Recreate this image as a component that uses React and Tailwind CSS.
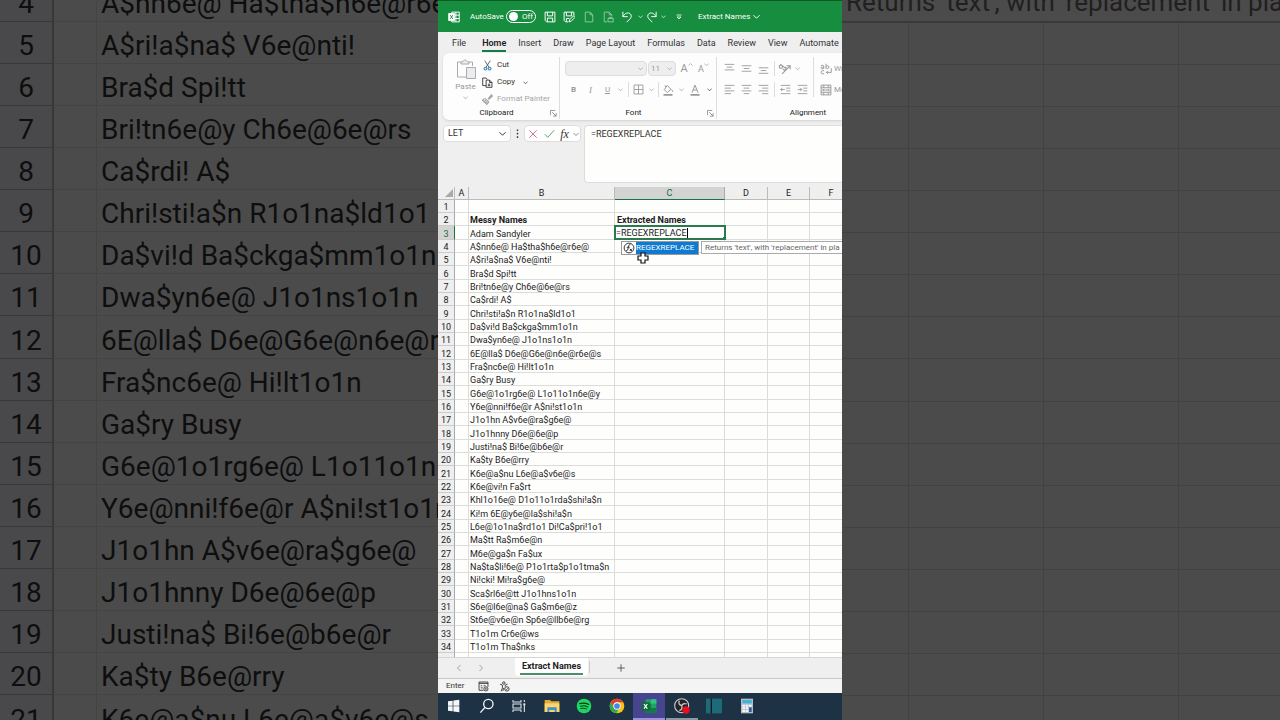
import { useState } from "react";

const names = [
  "Adam Sandyler",
  "A$nn6e@ Ha$tha$h6e@r6e@",
  "A$ri!a$na$ V6e@nti!",
  "Bra$d Spi!tt",
  "Bri!tn6e@y Ch6e@6e@rs",
  "Ca$rdi! A$",
  "Chri!sti!a$n R1o1na$ld1o1",
  "Da$vi!d Ba$ckga$mm1o1n",
  "Dwa$yn6e@ J1o1ns1o1n",
  "6E@lla$ D6e@G6e@n6e@r6e@s",
  "Fra$nc6e@ Hi!lt1o1n",
  "Ga$ry Busy",
  "G6e@1o1rg6e@ L1o11o1n6e@y",
  "Y6e@nni!f6e@r A$ni!st1o1n",
  "J1o1hn A$v6e@ra$g6e@",
  "J1o1hnny D6e@6e@p",
  "Justi!na$ Bi!6e@b6e@r",
  "Ka$ty B6e@rry",
  "K6e@a$nu L6e@a$v6e@s",
  "K6e@vi!n Fa$rt",
  "Khl1o16e@ D1o11o1rda$shi!a$n",
  "Ki!m 6E@y6e@la$shi!a$n",
  "L6e@1o1na$rd1o1 Di!Ca$pri!1o1",
  "Ma$tt Ra$m6e@n",
  "M6e@ga$n Fa$ux",
  "Na$ta$li!6e@ P1o1rta$p1o1tma$n",
  "Ni!cki! Mi!ra$g6e@",
  "Sca$rl6e@tt J1o1hns1o1n",
  "S6e@l6e@na$ Ga$m6e@z",
  "St6e@v6e@n Sp6e@llb6e@rg",
  "T1o1m Cr6e@ws",
  "T1o1m Tha$nks",
];

// row 1 is empty, row 2 holds the headings, names start at row 3
const rows = Array.from({ length: 34 }, (_, i) => ({
  n: i + 1,
  name: i === 1 ? "Messy Names" : names[i - 2] || "",
}));

const tabs = ["File", "Home", "Insert", "Draw", "Page Layout", "Formulas", "Data", "Review", "View", "Automate"];

// --- ICON HELPERS ---
const Icon = ({ className = "size-3", children }) => (
  <svg
    className={`shrink-0 ${className}`}
    viewBox="0 0 16 16"
    fill="none"
    stroke="currentColor"
    strokeWidth="1.3"
    aria-hidden="true"
  >
    {children}
  </svg>
);

const Chevron = ({ className = "size-[7px]" }) => (
  <Icon className={className}>
    <path d="M1 5l7 7 7-7" strokeWidth="2.2" />
  </Icon>
);

const Tool = ({ label, className = "w-[17px]", children }) => (
  <button aria-label={label} className={`flex shrink-0 items-center justify-center ${className}`}>
    {children}
  </button>
);

const Lines = ({ d, className = "size-[11px]" }) => (
  <Icon className={className}>
    <path d={d} />
  </Icon>
);

// --- ENLARGED SHEET BEHIND THE WINDOW ---
const BackdropLeft = () => (
  <div className="min-w-0 overflow-hidden">
    <table className="-mt-5 w-full table-fixed border-separate border-spacing-0 text-[28px] leading-[35px] text-[#0e0e0e]">
      <colgroup>
        <col className="w-[54px]" />
        <col className="w-[43px]" />
        <col />
      </colgroup>
      <tbody>
        {rows.slice(3, 21).map((r) => (
          <tr key={r.n} className="h-[42px] nth-[9n]:h-[43px]">
            <th className="overflow-hidden border-r-2 border-b border-r-[#383838] border-b-[#383838] bg-[#49494b] p-0 pt-[6px] text-center font-normal">
              {r.n}
            </th>
            <td className="border-r border-b border-[#444442] p-0" />
            <td className="overflow-hidden border-b border-[#444442] p-0 pt-[6px] pl-1 whitespace-nowrap">{r.name}</td>
          </tr>
        ))}
      </tbody>
    </table>
  </div>
);

const BackdropRight = () => (
  <div className="min-w-0 overflow-hidden">
    <div className="flex h-[23px] items-end overflow-hidden border-b-2 border-[#3a3a3a] pl-1 text-[26px] leading-[38px] whitespace-nowrap text-[#202020]">
      Returns 'text', with 'replacement' in pla
    </div>
    <table className="w-full table-fixed border-separate border-spacing-0">
      <colgroup>
        <col className="w-[67px]" />
        <col className="w-[135px]" />
        <col className="w-[135px]" />
        <col />
      </colgroup>
      <tbody>
        {rows.slice(4, 21).map((r) => (
          <tr key={r.n} className="h-[42px] nth-[9n]:h-[43px]">
            <td className="border-r border-b border-[#424240]" />
            <td className="border-r border-b border-[#424240]" />
            <td className="border-r border-b border-[#424240]" />
            <td className="border-b border-[#424240]" />
          </tr>
        ))}
      </tbody>
    </table>
  </div>
);

// --- TITLE BAR ---
const TitleBar = () => {
  const [autoSave, setAutoSave] = useState(false);
  return (
    <header className="flex h-8 shrink-0 items-center border-t border-[#0b5a27] bg-[#178d40] pl-[10px] text-[8px] text-white">
      <Icon className="mr-[10px] size-3">
        <path d="M5 3V1.500h10v13H5V13M9 5.500h6M9 10h6M10.500 1.500v13" />
        <rect x="1" y="3.500" width="7.500" height="9" fill="#fff" />
        <path d="M3 5.500l3.500 5M6.500 5.500l-3.500 5" stroke="#178d40" />
      </Icon>
      <label className="flex items-center">
        <span className="w-[36px]">AutoSave</span>
        <input
          type="checkbox"
          role="switch"
          className="sr-only"
          checked={autoSave}
          onChange={(e) => setAutoSave(e.target.checked)}
        />
        <span className="flex h-[13px] w-[30px] items-center gap-1 rounded-full border border-white pl-[2px]">
          <span className="size-[9px] rounded-full bg-white" />
          <span>{autoSave ? "On" : "Off"}</span>
        </span>
      </label>
      <div className="ml-1 flex items-center">
        <Tool label="Save" className="w-[19px]">
          <Icon>
            <path d="M1.500 1.500h13v13h-11l-2-2zM4.500 1.500v5h7v-5M4.500 14.500v-5h7v5" />
          </Icon>
        </Tool>
        <Tool label="Save as" className="w-[20px]">
          <Icon>
            <path d="M7 14.500H3.500l-2-2v-11h13v5M4.500 1.500v5h7v-5M4.500 14v-4h4M8 14.500l1-3 5-5 2 2-5 5z" />
          </Icon>
        </Tool>
        <Tool label="New" className="w-[19px] opacity-50">
          <Icon>
            <path d="M3 1.500h6.500L13 5v9.500H3zM9.500 1.500V5H13" />
          </Icon>
        </Tool>
        <Tool label="Protect" className="w-[20px] opacity-50">
          <Icon>
            <path d="M7 14.500H3v-13h6.500L13 5v2M9.500 1.500V5H13M8 10h7v4.500H8zM9.500 10V8.500h4V10" />
          </Icon>
        </Tool>
        <Tool label="Undo" className="w-[18px]">
          <Icon>
            <path d="M2.500 1v6.500H9M2.500 7.500C5 3 9 1.500 12 3.500c2.500 2 2 5 0 7L7.500 15" />
          </Icon>
        </Tool>
        <Chevron className="ml-[2px] size-[5px]" />
        <Tool label="Redo" className="w-[18px]">
          <Icon>
            <path d="M13.500 1v6.500H7M13.500 7.500C11 3 7 1.500 4 3.500c-2.500 2-2 5 0 7L8.500 15" />
          </Icon>
        </Tool>
        <Chevron className="size-[5px]" />
        <Tool label="Customize" className="ml-[6px] w-[14px]">
          <Icon className="size-2">
            <path d="M3 4h10M4 8l4 4 4-4z" strokeWidth="1.600" />
          </Icon>
        </Tool>
      </div>
      <button className="ml-3 flex items-center gap-[3px] whitespace-nowrap">
        Extract Names <Chevron />
      </button>
    </header>
  );
};

const RibbonTabs = () => (
  <nav className="flex h-[21px] shrink-0 items-center gap-3 pt-[2px] pl-[14px] text-[9px] leading-[14px] whitespace-nowrap text-[#333]">
    {tabs.map((tab) => (
      <a
        key={tab}
        href="#"
        className={
          tab === "Home"
            ? "ml-1 border-b-2 border-[#187a45] font-semibold text-[#222]"
            : "border-b-2 border-transparent"
        }
      >
        {tab}
      </a>
    ))}
  </nav>
);

// --- RIBBON ---
const Launcher = () => (
  <Icon className="size-[7px]">
    <path d="M1 12V1h11M5 5l9 9M14 7v7H7" strokeWidth="1.700" />
  </Icon>
);

const Group = ({ title, className, children }) => (
  <section className={`flex shrink-0 flex-col justify-between ${className}`}>
    {children}
    <div className="flex h-3 items-center pr-[2px]">
      <h2 className="flex-1 text-center text-[#222]">{title}</h2>
      {title !== "Alignment" && (
        <button aria-label={`${title} settings`} className="text-[#777]">
          <Launcher />
        </button>
      )}
    </div>
  </section>
);

const Ribbon = () => (
  <div className="ml-[5px] flex h-[67px] shrink-0 overflow-hidden rounded-l-md bg-[#fdfdfd] pt-1 pb-px text-[8px] leading-[12px] whitespace-nowrap text-[#999] shadow-sm">
    <Group title="Clipboard" className="w-[117px] border-r border-[#ddd]">
      <div className="flex pl-[10px]">
        <button className="flex w-[25px] flex-col items-center pt-[2px]">
          <svg className="h-[21px] w-5" viewBox="0 0 20 21" fill="none" stroke="#aaa" aria-hidden="true">
            <path d="M5 3H1.500v15H10M13 3h3.500v4" />
            <path d="M5 5V3l2-.5C7.500.5 10.500.5 11 2.500l2 .5v2z" fill="#eee" />
            <path d="M10.500 8.500h9v11h-9z" fill="#ececf0" />
          </svg>
          <span className="mt-px">Paste</span>
          <Chevron className="mt-[2px] size-[5px]" />
        </button>
        <div className="ml-1 flex flex-col gap-[5px] pt-[2px] text-[#333]">
          <button className="flex items-center gap-1">
            <Icon className="size-[11px]">
              <path d="M4 1l6.500 10M12 1L5.500 11" stroke="#555" />
              <path d="M5 10.500a2 2 0 1 0 .1 0M11 10.500a2 2 0 1 0 .1 0" stroke="#3b86bd" strokeWidth="1.600" />
            </Icon>
            Cut
          </button>
          <button className="flex items-center gap-1">
            <Icon className="size-[11px]">
              <path d="M6 12.500H1v-11h5l2 2M6 4.500h5l3.500 3.500v7H6zM11 4.500V8h3.500M8.500 10.500H12M8.500 12.500H12" />
            </Icon>
            Copy
            <Chevron className="ml-1 size-[5px]" />
          </button>
          <button className="flex items-center gap-1 text-[#a5a5a5]">
            <Icon className="size-[11px]">
              <path d="M9 7l4.500-5.500 1.500 1.500-5.500 5M4 6l6 5.500M3 7L1 9l6 6 3-3.500M3.500 11l2-2M5.500 13l2-2" strokeWidth="1.800" />
            </Icon>
            Format Painter
          </button>
        </div>
      </div>
    </Group>

    <Group title="Font" className="w-[157px] border-r border-[#ddd]">
      <div className="flex flex-col gap-[6px] pt-1 pl-[5px]">
        <div className="flex items-center">
          <span className="relative flex items-center">
            <select aria-label="Font" className="h-[15px] w-[82px] appearance-none rounded-sm border border-[#ddd] bg-[#eeeeef]">
              <option />
            </select>
            <Chevron className="pointer-events-none absolute right-1 size-[5px]" />
          </span>
          <span className="relative ml-px flex items-center">
            <select
              aria-label="Font size"
              className="h-[15px] w-7 appearance-none rounded-sm border border-[#ddd] bg-[#eeeeef] pl-[2px]"
            >
              <option>11</option>
            </select>
            <Chevron className="pointer-events-none absolute right-1 size-[5px]" />
          </span>
          <Tool label="Increase font size" className="ml-[2px] w-[17px]">
            <span className="text-[11px]">A</span>
            <Icon className="mb-2 size-[5px]">
              <path d="M2 11l6-6 6 6" strokeWidth="2.200" />
            </Icon>
          </Tool>
          <Tool label="Decrease font size">
            <span className="text-[9px]">A</span>
            <Chevron className="mb-2 size-[5px]" />
          </Tool>
        </div>
        <div className="flex h-[15px] items-center">
          <Tool label="Bold">
            <b>B</b>
          </Tool>
          <Tool label="Italic">
            <i className="font-['Liberation_Serif',serif] text-[9px]">I</i>
          </Tool>
          <Tool label="Underline">
            <u>U</u>
          </Tool>
          <Tool label="Underline style" className="w-2">
            <Chevron className="size-[5px]" />
          </Tool>
          <span className="ml-1 h-[15px] w-px bg-[#ddd]" />
          <Tool label="Borders" className="w-[18px]">
            <Icon className="size-[11px]">
              <path d="M1.500 1.500h13v13h-13zM8 1.500v13M1.500 8h13" />
            </Icon>
          </Tool>
          <Tool label="Border style" className="w-2">
            <Chevron className="size-[5px]" />
          </Tool>
          <span className="ml-[3px] h-[15px] w-px bg-[#ddd]" />
          <Tool label="Fill color" className="w-[18px]">
            <Icon className="size-[12px]">
              <path d="M7 2l5 5-5 4.500L3 7.500zM5 4L4 2M13 7.500l1.500 3" />
              <path d="M2 14.500h12" strokeWidth="2.600" />
            </Icon>
          </Tool>
          <Tool label="Fill options" className="w-2">
            <Chevron className="size-[5px]" />
          </Tool>
          <Tool label="Font color" className="w-[20px]">
            <Icon className="size-[12px]">
              <path d="M4 11.500L8 1.500l4 10M5.500 8h5" />
              <path d="M2 14.500h12" strokeWidth="2.600" />
            </Icon>
          </Tool>
          <Tool label="Font color options" className="w-2 text-[#333]">
            <Chevron className="size-[5px]" />
          </Tool>
        </div>
      </div>
    </Group>

    <Group title="Alignment" className="w-[184px]">
      <div className="flex pl-1">
        <div className="flex flex-col gap-[6px] pt-1">
          <div className="flex h-[15px] items-center">
            <Tool label="Top align">
              <Lines d="M1 2h14M4 6h8M1 10h14" />
            </Tool>
            <Tool label="Middle align">
              <Lines d="M1 4h14M4 8h8M1 12h14" />
            </Tool>
            <Tool label="Bottom align">
              <Lines d="M1 7h14M4 11h8M1 15h14" />
            </Tool>
            <span className="mx-[2px] h-[15px] w-px bg-[#ddd]" />
            <Tool label="Orientation" className="w-[14px]">
              <Icon className="size-[13px]">
                <path d="M1.500 6a2 2 0 1 1 3 1.500 2 2 0 0 1-3-1.500M3 2.500l6 5M6 8a2 2 0 1 0 3-2M5 14.500L14.500 5M10.500 4.500h4.500V9" />
              </Icon>
            </Tool>
            <Chevron className="ml-1 size-[5px]" />
          </div>
          <div className="flex h-[15px] items-center">
            <Tool label="Align left">
              <Lines d="M1 2h14M1 6h9M1 10h14M1 14h9" />
            </Tool>
            <Tool label="Center">
              <Lines d="M1 2h14M4 6h8M1 10h14M4 14h8" />
            </Tool>
            <Tool label="Align right">
              <Lines d="M1 2h14M6 6h9M1 10h14M6 14h9" />
            </Tool>
            <span className="mx-[2px] h-[15px] w-px bg-[#ddd]" />
            <Tool label="Decrease indent">
              <Lines d="M1 2h14M9 6h6M9 10h6M1 14h14M7 8H1M3.500 5.500L1 8l2.500 2.500" />
            </Tool>
            <Tool label="Increase indent">
              <Lines d="M1 2h14M9 6h6M9 10h6M1 14h14M1 8h6M4.500 5.500L7 8l-2.500 2.500" />
            </Tool>
          </div>
        </div>
        <div className="ml-[2px] flex flex-col gap-[6px] border-l border-[#ddd] pt-1 pl-[6px]">
          <button className="flex h-[15px] items-center gap-[2px]">
            <Icon>
              <path d="M1.500 3.500c2-1 3.500-.5 3.500 1v3M5 5.500c-2 0-4 0-3.800 1.500.3 1 2.800 1 3.800-.5M8 1v6.500M8 4.500c1-1.500 4-1 4 1s-3 2.500-4 1M5.500 10.500c-2-1-4 0-4 2s2 2.500 4 1.500M15 7v5.500H8.500M10.500 10.500l-2 2 2 2" />
            </Icon>
            Wrap
          </button>
          <button className="flex h-[15px] items-center gap-[2px]">
            <Icon>
              <path d="M1.500 1.500h13v13h-13zM1.500 5h13M1.500 11h13M5 1.500V5M11 1.500V5M5 11v3.500M11 11v3.500M3.500 8h9M5 6.500L3.500 8 5 9.500M11 6.500L12.500 8 11 9.500" />
            </Icon>
            Merge
          </button>
        </div>
      </div>
    </Group>
  </div>
);

// --- FORMULA BAR ---
const FormulaBar = ({ formula, setFormula }) => (
  <div className="flex h-[67px] shrink-0 items-start pt-[5px] pl-[5px] text-[9px] text-[#333]">
    <label className="flex h-[17px] w-[68px] items-center rounded-sm border border-[#ddd] bg-white px-1">
      <input aria-label="Name box" defaultValue="LET" className="w-0 flex-1 outline-none" />
      <Chevron />
    </label>
    <span className="flex h-[17px] w-[13px] items-center justify-center">
      <Icon className="size-[11px]">
        <path d="M8 2v2.500M8 7v2.500M8 12v2.500" strokeWidth="2" />
      </Icon>
    </span>
    <div className="flex h-[17px] w-[57px] items-center rounded-sm border border-[#ddd] bg-white">
      <Tool label="Cancel" className="w-4 text-[#c4576f]">
        <Lines d="M2 2l12 12M14 2L2 14" className="size-[10px]" />
      </Tool>
      <Tool label="Enter" className="w-4 text-[#4a9c62]">
        <Lines d="M1 9l4.500 4.500L15 3" />
      </Tool>
      <Tool label="Insert function" className="w-[15px]">
        <i className="font-['Liberation_Serif',serif] text-[12px] leading-none">fx</i>
      </Tool>
      <Chevron className="ml-px size-[6px] text-[#777]" />
    </div>
    <textarea
      aria-label="Formula"
      value={formula}
      onChange={(e) => setFormula(e.target.value)}
      className="ml-[3px] h-[58px] w-0 flex-1 resize-none rounded-l-sm border border-r-0 border-[#ddd] bg-[#fefefc] px-[6px] py-[2px] leading-[12px] outline-none"
    />
  </div>
);

// --- SHEET ---
const Suggestion = () => (
  <div className="absolute top-[15px] left-[6px] z-10 flex items-start gap-[2px] text-[8px]">
    <button className="flex h-[14px] w-[78px] items-center border border-[#999] bg-white text-white">
      <Icon className="mx-px size-3 text-[#333]">
        <circle cx="8" cy="8" r="6.500" />
        <path d="M10 3.500c-2-.5-2.500 1-3 4s-1 4.500-3 4M5 7h4M9 9l3 3M12 9l-3 3" />
      </Icon>
      <span className="h-full flex-1 bg-[#0e7ad1] text-left leading-[12px]">REGEXREPLACE</span>
    </button>
    <div className="h-[13px] w-[160px] border border-[#aaa] bg-white pl-[3px] leading-[11px] whitespace-nowrap text-[#666]">
      Returns 'text', with 'replacement' in pla
    </div>
    <svg className="absolute top-[11px] left-4 size-3" viewBox="0 0 12 12" aria-hidden="true">
      <path d="M4 1h4v3h3v4H8v3H4V8H1V4h3z" fill="#fff" stroke="#111" strokeWidth="1.200" />
    </svg>
  </div>
);

const line = "border-r border-b border-[#dcdcdc] p-0";

const Sheet = ({ formula, setFormula }) => (
  <div className="min-h-0 flex-1 overflow-hidden bg-[#fefefd]">
    <table className="w-[415px] table-fixed border-separate border-spacing-0 text-[9px] leading-[10px] text-[#1c1c1c]">
      <colgroup>
        <col className="w-[17px]" />
        <col className="w-[14px]" />
        <col className="w-[146px]" />
        <col className="w-[110px]" />
        <col className="w-[43px]" />
        <col className="w-[42px]" />
        <col className="w-[43px]" />
      </colgroup>
      <thead>
        <tr className="h-[13px] bg-[#efefef]">
          <th className="border-r border-b border-[#bbb] p-0">
            <svg className="ml-[7px] size-2" viewBox="0 0 8 8" aria-hidden="true">
              <path d="M8 0v8H0z" fill="#aaa" />
            </svg>
          </th>
          {["A", "B", "C", "D", "E", "F"].map((c) => (
            <th
              key={c}
              className={
                c === "C"
                  ? "border-r border-b border-r-[#aaa] border-b-[#1b7245] bg-[#d2d3d2] p-0 font-normal text-[#1b6b41]"
                  : "border-r border-b border-[#bbb] p-0 font-normal"
              }
            >
              {c}
            </th>
          ))}
        </tr>
      </thead>
      <tbody>
        {rows.map((r) => (
          <tr key={r.n} className="h-[13px] nth-[3n]:h-[14px]">
            <th
              className={
                r.n === 3
                  ? "border-r border-b border-r-[#1b7245] border-b-[#ccc] bg-[#d2d3d2] p-0 pt-[2px] font-normal text-[#1b6b41]"
                  : "border-r border-b border-r-[#aaa] border-b-[#ccc] bg-[#efefef] p-0 pt-[2px] font-normal"
              }
            >
              {r.n}
            </th>
            <td className={line} />
            <td className={`${line} pt-[2px] pl-px whitespace-nowrap ${r.n === 2 ? "font-bold" : ""}`}>{r.name}</td>
            {r.n === 3 ? (
              <td className="relative p-0">
                <div className="absolute -inset-x-px -top-px bottom-0 flex items-center border-2 border-[#2b7a4d] bg-white">
                  <input
                    aria-label="Cell C3"
                    value={formula}
                    onChange={(e) => setFormula(e.target.value)}
                    className="field-sizing-content h-[11px] outline-none"
                  />
                  <span className="h-[10px] w-px bg-black" />
                  <span className="absolute -right-[2px] -bottom-[2px] size-[3px] bg-[#2b7a4d]" />
                </div>
                <Suggestion />
              </td>
            ) : (
              <td className={`${line} pt-[2px] pl-[2px] font-bold`}>{r.n === 2 ? "Extracted Names" : ""}</td>
            )}
            <td className={line} />
            <td className={line} />
            <td className={line} />
          </tr>
        ))}
        {/* top of the next row, cut by the sheet tabs */}
        <tr className="h-1">
          <th className="border-r border-[#aaa] bg-[#efefef] p-0" />
          <td className="border-r border-[#dcdcdc] p-0" />
          <td className="border-r border-[#dcdcdc] p-0" />
          <td className="border-r border-[#dcdcdc] p-0" />
          <td className="border-r border-[#dcdcdc] p-0" />
          <td className="border-r border-[#dcdcdc] p-0" />
          <td className="p-0" />
        </tr>
      </tbody>
    </table>
  </div>
);

const SheetTabs = () => (
  <div className="flex h-[21px] shrink-0 items-start border-t border-[#d5d5d5] bg-[#efefef] pl-[15px] text-[9px] text-[#777]">
    <Tool label="Previous sheet" className="h-[19px] w-3">
      <Lines d="M11 2L5 8l6 6" className="size-2" />
    </Tool>
    <Tool label="Next sheet" className="ml-[10px] h-[19px] w-3">
      <Lines d="M5 2l6 6-6 6" className="size-2" />
    </Tool>
    <button className="ml-[28px] h-[18px] w-[73px] rounded-b bg-white px-[5px] font-bold whitespace-nowrap text-[#222]">
      <span className="block border-b-2 border-[#4d8f6b] leading-[13px]">Extract Names</span>
    </button>
    <span className="mt-[3px] ml-px h-3 w-px bg-[#ccc]" />
    <Tool label="New sheet" className="ml-[25px] h-[19px] w-3 text-[#444]">
      <Lines d="M8 2v12M2 8h12" className="size-[10px]" />
    </Tool>
  </div>
);

const StatusBar = () => (
  <footer className="flex h-[15px] shrink-0 items-center border-t border-[#c8c8c8] bg-[#f4f4f5] pl-2 text-[8px] text-[#333]">
    <span className="w-[32px]">Enter</span>
    <Icon className="size-[11px]">
      <path d="M1.500 3.500h13M1.500 1.500h13v7M1.500 1.500v12H8M4 7h2M8 7h3M4 10h3" />
      <circle cx="11.500" cy="11.500" r="3" />
      <circle cx="11.500" cy="11.500" r=".7" />
    </Icon>
    <Icon className="ml-[10px] size-[11px]">
      <circle cx="7" cy="3" r="1.800" />
      <path d="M1.500 4.500L5 6v4l-2 5M12.500 4.500L9 6v2M7 10l-1.500 4.500" />
      <circle cx="11.500" cy="11.500" r="3.200" />
      <path d="M10 11.500l1 1 2-2" />
    </Icon>
  </footer>
);

// --- TASKBAR ---
const apps = [
  {
    name: "Start",
    art: <path d="M3 5l7-1v7.500H3zM11 3.800L20 2.500v9h-9zM3 12.500h7V20l-7-1zM11 12.500h9v9l-9-1.300z" fill="#f4f6f8" />,
  },
  {
    name: "Search",
    art: (
      <g fill="none" stroke="#f4f6f8" strokeWidth="2">
        <circle cx="14" cy="9" r="7" />
        <path d="M9 14l-7 8" />
      </g>
    ),
  },
  {
    name: "Task View",
    art: (
      <g fill="none" stroke="#e4e8ec" strokeWidth="1.600">
        <path d="M3 3v3h12V3M3 21v-3h12v3M3 9h12v6H3zM20 3v3M20 9v12" />
        <path d="M18.500 9.500h3" strokeWidth="3" />
      </g>
    ),
  },
  {
    name: "File Explorer",
    art: (
      <g>
        <path d="M1 3h8l2 2h12v16H1z" fill="#e5a92f" />
        <path d="M1 8h22v13H1z" fill="#fbd66b" />
        <path d="M5 14h14v7h-3v-3H8v3H5z" fill="#3d8fd0" />
      </g>
    ),
  },
  {
    name: "Spotify",
    art: (
      <g fill="none" stroke="#16321f" strokeLinecap="round">
        <circle cx="12" cy="12" r="11" fill="#1ed760" stroke="none" />
        <path d="M5.500 8.500c5-1.500 9.500-1 13.500 1" strokeWidth="2" />
        <path d="M6.500 12.300c4-1.200 8-.8 11 1" strokeWidth="1.700" />
        <path d="M7 15.800c3.500-.9 6.500-.6 9 .9" strokeWidth="1.400" />
      </g>
    ),
  },
  {
    name: "Chrome",
    art: (
      <g>
        <circle cx="12" cy="12" r="11" fill="#fbc116" />
        <path d="M2.500 6.500A11 11 0 0 1 21.500 6.500H12a5.500 5.500 0 0 0-4.800 8.200z" fill="#e33b2e" />
        <path d="M2.500 6.500A11 11 0 0 0 11 23l4.800-8.300a5.500 5.500 0 0 1-8.600 0z" fill="#2da94f" />
        <circle cx="12" cy="12" r="5.500" fill="#fff" />
        <circle cx="12" cy="12" r="4.300" fill="#4285f4" />
      </g>
    ),
  },
  {
    name: "Excel",
    art: (
      <g>
        <path d="M7 2h16v20H7z" fill="#21a366" />
        <path d="M15 2h8v6.500h-8z" fill="#33c481" />
        <path d="M7 8.500h8V15H7zM7 15h16v7H7z" fill="#107c41" />
        <path d="M1 6.500h12v12H1z" fill="#0e6b38" />
        <path d="M4.500 9l5 7M9.500 9l-5 7" stroke="#fff" strokeWidth="1.800" />
      </g>
    ),
  },
  {
    name: "OBS Studio",
    art: (
      <g>
        <circle cx="11.500" cy="11.500" r="10.500" fill="#25222a" stroke="#d0d0d0" strokeWidth="1.600" />
        <path d="M8 4c-2 4 0 6.500 3.500 7.500M19 9c-4-1.500-6.500.5-7.500 2.500M8 19c4-1 4.500-4 3.500-7.500" fill="none" stroke="#c8c8c8" strokeWidth="2" />
        <circle cx="18" cy="18" r="5.500" fill="#e8101c" />
      </g>
    ),
  },
  {
    name: "Notebook",
    art: (
      <g>
        <path d="M0 1h24v22H0z" fill="#1d6b78" />
        <path d="M7 1h2v22H7z" fill="#0d1b26" />
      </g>
    ),
  },
  {
    name: "Calculator",
    art: (
      <g>
        <path d="M3 1h18v22H3z" fill="#b5bcc4" />
        <path d="M5 3h14v5H5z" fill="#3db5d8" />
        <path d="M5 10h4v3H5zM10 10h4v3h-4zM15 10h4v3h-4zM5 14h4v3H5zM10 14h4v3h-4zM5 18h4v3H5zM10 18h4v3h-4z" fill="#f4f6f8" />
        <path d="M15 14h4v7h-4z" fill="#2c5f9e" />
      </g>
    ),
  },
];

const appStyles = {
  Excel: "border-b-2 border-[#9a94dd] bg-[#484590]",
  "OBS Studio": "border-b-2 border-[#8d98a5]",
};

const Taskbar = () => (
  <nav className="flex h-[27px] shrink-0 bg-[#1d3245]">
    <div className="flex w-[325px] justify-between">
      {apps.map((app) => (
        <button
          key={app.name}
          aria-label={app.name}
          className={`flex w-8 items-center justify-center ${appStyles[app.name] || "border-b-2 border-transparent"}`}
        >
          <svg className="size-4" viewBox="0 0 24 24" aria-hidden="true">
            {app.art}
          </svg>
        </button>
      ))}
    </div>
  </nav>
);

const App = () => {
  const [formula, setFormula] = useState("=REGEXREPLACE");

  return (
    <div className="grid h-screen grid-cols-[1fr_404px_1fr] overflow-hidden bg-[#4b4b4b] font-['Roboto',sans-serif]">
      <BackdropLeft />
      <main className="flex min-h-0 min-w-0 flex-col overflow-hidden bg-[#efeff0]">
        <TitleBar />
        <RibbonTabs />
        <Ribbon />
        <FormulaBar formula={formula} setFormula={setFormula} />
        <Sheet formula={formula} setFormula={setFormula} />
        <SheetTabs />
        <StatusBar />
        <Taskbar />
      </main>
      <BackdropRight />
    </div>
  );
};

export default App;
